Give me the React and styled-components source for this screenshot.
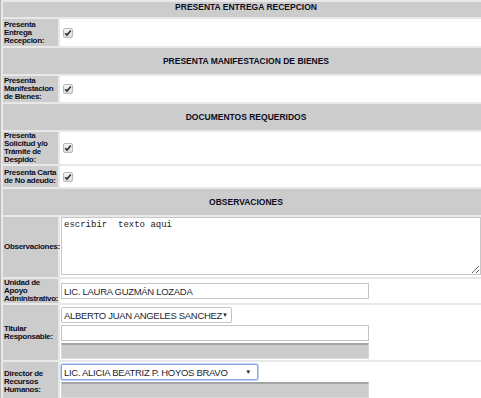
import React from "react";
import styled, { createGlobalStyle } from "styled-components";

const GlobalStyle = createGlobalStyle`
	html, body {
		margin: 0;
		padding: 0;
		background: #fff;
		overflow: hidden;
	}
	body {
		font-family: "Liberation Sans", Arial, sans-serif;
	}
`;

const Sheet = styled.div`
	width: 486px;
	display: grid;
	grid-template-columns: 55px 1fr;
	gap: 2px;
	padding: 2px 0 2px 2px;
	background: #e8e8e8;
	border-left: 1px solid #b8b8b8;
`;

const SectionHeader = styled.div`
	grid-column: 1 / -1;
	height: ${(p) => p.$height || 26}px;
	display: flex;
	align-items: center;
	justify-content: center;
	background: #cccccc;
	color: #0d0d1f;
	font-size: 8.5px;
	font-weight: bold;
	padding-bottom: ${(p) => p.$shift || 0}px;
	box-sizing: border-box;
`;

const Label = styled.div`
	min-height: ${(p) => p.$height || 0}px;
	display: flex;
	align-items: center;
	background: #cccccc;
	color: #0d0d1f;
	font-size: 8px;
	letter-spacing: -0.3px;
	line-height: 8px;
	font-weight: bold;
	padding: 0 0 0 1px;
	box-sizing: border-box;
	white-space: nowrap;
`;

const Value = styled.div`
	background: #fff;
	display: flex;
	flex-direction: column;
	align-items: flex-start;
	justify-content: center;
	gap: ${(p) => p.$gap || 2}px;
	padding: ${(p) => p.$pad || "1px 0"};
`;

const CheckBox = styled.span`
	width: 10px;
	height: 10px;
	margin-left: 3px;
	box-sizing: border-box;
	border: 1px solid #b9b9b9;
	border-radius: 2px;
	background: linear-gradient(#f4f4f4, #dcdcdc);
	display: flex;
	align-items: center;
	justify-content: center;
`;

const Check = () => (
	<CheckBox>
		<svg width="8" height="8" viewBox="0 0 8 8">
			<path d="M1.2 4.2 L3 6 L6.8 1.6" fill="none" stroke="#2b2b2b" strokeWidth="1.6" />
		</svg>
	</CheckBox>
);

const TextArea = styled.textarea`
	width: 420px;
	height: 58px;
	margin: 0 0 0 1px;
	box-sizing: border-box;
	border: 1px solid #c8c8c8;
	padding: 2px 2px;
	font-family: "Liberation Mono", "Courier New", monospace;
	font-size: 9px;
	color: #222;
	white-space: pre;
	outline: none;
`;

const TextInput = styled.input`
	width: ${(p) => p.$width || 308}px;
	height: 16px;
	margin: 0 0 0 1px;
	box-sizing: border-box;
	border: 1px solid #c4c4c4;
	padding: 0 2px;
	font-family: "Liberation Sans", Arial, sans-serif;
	font-size: 9.5px;
	letter-spacing: -0.3px;
	color: #221f33;
	background: #fff;
	outline: none;

	&:disabled {
		background: #cccccc;
		border: 1px solid #d8d8d8;
		border-top: 2px solid #a4a4a4;
		height: 16px;
	}
`;

const SelectBox = styled.div`
	width: ${(p) => p.$width}px;
	height: 16px;
	margin-left: 1px;
	box-sizing: border-box;
	display: flex;
	align-items: center;
	justify-content: space-between;
	padding: 0 6px 0 2px;
	border: 1px solid ${(p) => (p.$focused ? "#7ea6e6" : "#c4c4c4")};
	box-shadow: ${(p) => (p.$focused ? "0 0 0 1px #c4d7f5" : "none")};
	border-radius: 2px;
	font-family: "Liberation Sans", Arial, sans-serif;
	font-size: 9.5px;
	letter-spacing: -0.3px;
	color: #221f33;
	background: #fff;
	white-space: nowrap;
	overflow: hidden;
`;

const Arrow = styled.span`
	font-size: 6px;
	color: #222;
`;

const Select = ({ value, width, focused }) => (
	<SelectBox $width={width} $focused={focused}>
		<span>{value}</span>
		<Arrow>▼</Arrow>
	</SelectBox>
);

export default function App() {
	return (
		<>
			<GlobalStyle />
			<Sheet>
				<SectionHeader $height={15} $shift={6}>PRESENTA ENTREGA RECEPCION</SectionHeader>
				<Label $height={27}>
					Presenta
					<br />
					Entrega
					<br />
					Recepcion:
				</Label>
				<Value>
					<Check />
				</Value>

				<SectionHeader>PRESENTA MANIFESTACION DE BIENES</SectionHeader>
				<Label $height={26}>
					Presenta
					<br />
					Manifestacion
					<br />
					de Bienes:
				</Label>
				<Value>
					<Check />
				</Value>

				<SectionHeader>DOCUMENTOS REQUERIDOS</SectionHeader>
				<Label $height={31}>
					Presenta
					<br />
					Solicitud y/o
					<br />
					Trámite de
					<br />
					Despido:
				</Label>
				<Value>
					<Check />
				</Value>
				<Label $height={21}>
					Presenta Carta
					<br />
					de No adeudo:
				</Label>
				<Value>
					<Check />
				</Value>

				<SectionHeader>OBSERVACIONES</SectionHeader>
				<Label>Observaciones:</Label>
				<Value $pad="0 0 2px">
					<TextArea defaultValue="escribir  texto aqui" />
				</Value>
				<Label $height={24}>
					Unidad de
					<br />
					Apoyo
					<br />
					Administrativo:
				</Label>
				<Value>
					<TextInput defaultValue="LIC. LAURA GUZMÁN LOZADA" />
				</Value>
				<Label>
					Titular
					<br />
					Responsable:
				</Label>
				<Value $pad="2px 0 1px" $gap={2}>
					<Select value="ALBERTO JUAN ANGELES SANCHEZ" width={171} />
					<TextInput defaultValue="" />
					<TextInput disabled defaultValue="" />
				</Value>
				<Label>
					Director de
					<br />
					Recursos
					<br />
					Humanos:
				</Label>
				<Value $pad="2px 0 4px">
					<Select value="LIC. ALICIA BEATRIZ P. HOYOS BRAVO" width={197} focused />
					<TextInput disabled defaultValue="" />
				</Value>
			</Sheet>
		</>
	);
}
